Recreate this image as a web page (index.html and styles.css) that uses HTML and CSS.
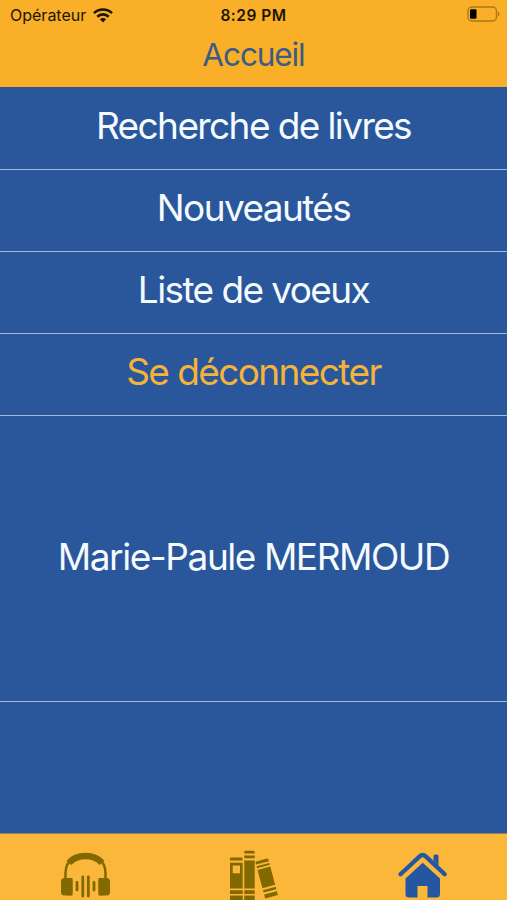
FILE: index.html
```
<!DOCTYPE html>
<html lang="fr">
<head>
    <meta charset="UTF-8">
    <meta name="viewport" content="width=device-width, initial-scale=1.0">
    <title>Accueil</title>
    <link rel="stylesheet" href="styles.css">
</head>
<body>
    <header class="header">
        <div class="status-bar">
            <div class="carrier">
                <span class="carrier-name">Opérateur</span>
                <svg class="wifi" viewBox="0 0 20 15" width="20" height="15">
                    <g fill="none" stroke="#1c1503" stroke-width="2.7">
                        <path d="M1 5.1C6 .3 14 .3 19 5.1"/>
                        <path d="M4.3 8.7C7.5 5.7 12.5 5.7 15.7 8.7"/>
                    </g>
                    <path fill="#1c1503" d="M10 14.4L6.9 11.3C8.6 9.7 11.4 9.7 13.1 11.3Z"/>
                </svg>
            </div>
            <span class="time">8:29 PM</span>
            <div class="battery">
                <svg viewBox="0 0 34 16" width="34" height="16">
                    <rect x="1" y="1" width="28.5" height="14" rx="4" fill="none" stroke="#ad7718" stroke-width="1.4"/>
                    <rect x="3" y="3.2" width="6.5" height="9.6" rx="1.2" fill="#000"/>
                    <path fill="#ad7718" d="M31 5.6C33 6.2 33 9.8 31 10.4Z"/>
                </svg>
            </div>
        </div>
        <h1 class="title">Accueil</h1>
    </header>

    <main class="menu">
        <a class="menu-item first">Recherche de livres</a>
        <a class="menu-item">Nouveautés</a>
        <a class="menu-item">Liste de voeux</a>
        <a class="menu-item logout">Se déconnecter</a>
        <div class="menu-item user">Marie-Paule MERMOUD</div>
    </main>

    <nav class="tab-bar">
        <a class="tab">
            <svg class="tab-icon" viewBox="0 0 70 60" width="70" height="60">
                <g fill="none" stroke="#816900">
                    <path stroke-width="2.5" d="M15.5 39V33C15.5 27 18 22 22 18.5M55.5 39V33C55.5 27 53 22 49 18.5"/>
                    <path stroke-width="6.5" d="M19 22.8C27 13.8 44 13.800 52 22.800"/>
                    <path stroke-width="2.8" stroke-linecap="round" d="M27 42.5V50M32.8 37V56M38.3 37V56M44 42.5V50"/>
                </g>
                <g fill="#816900">
                    <rect x="11" y="38" width="11.5" height="17.5" rx="3.5"/>
                    <path d="M18 38h4.5v17.5h-4.5z"/>
                    <rect x="48.5" y="38" width="11.5" height="17.5" rx="3.5"/>
                    <path d="M48.5 38h4.5v17.5h-4.5z"/>
                </g>
            </svg>
        </a>
        <a class="tab">
            <svg class="tab-icon" viewBox="0 0 70 60" width="70" height="60">
                <g fill="#816900">
                    <path d="M10 20V18.5Q10 17.5 11 17.5H21.5Q22.5 17.5 22.5 18.5V20.5H10Z"/>
                    <path fill-rule="evenodd" d="M10 22.7H22.7V48.5H10ZM12.7 25.5V33.3H20V25.5Z"/>
                    <path d="M10 50.3H22.7V54H10ZM10 55.5H22.7V60H10Z"/>
                    <path d="M24.3 13.5V12Q24.3 10.7 25.6 10.7H33.5Q34.7 10.7 34.7 12V13.5ZM24.3 15.5H34.7V18.3H24.3ZM24.3 20.5H34.7V48.5H24.3ZM24.3 50.3H34.7V54H24.3ZM24.3 55.5H34.7V60H24.3Z"/>
                    <g transform="translate(35.3 21.7) rotate(-15)">
                        <path d="M0 3V1Q0 0 1 0H12.2Q13.2 0 13.2 1V3ZM0 4.8H13.2V6.8H0ZM0 8.6H13.2V27.5H0ZM0 29.5H13.2V32H0ZM0 34H13.2V38H0Z"/>
                    </g>
                </g>
            </svg>
        </a>
        <a class="tab">
            <svg class="tab-icon" viewBox="0 0 70 60" width="70" height="60">
                <path fill="none" stroke="#2456a2" stroke-width="4.3" stroke-linecap="round" stroke-linejoin="round" d="M10.5 34.3L29.7 16.4Q32.7 13.7 35.7 16.4L54.7 34.3"/>
                <path fill="#2456a2" d="M43.5 20.5V16Q43.5 14.5 45 14.5H47Q48.5 14.5 48.5 16V26Z"/>
                <path fill="#2456a2" d="M15.5 38.5L32.7 22.8L50 38.5V54Q50 57.500 46.500 57.500H37.500V46H27.500V57.500H19Q15.500 57.500 15.500 54Z"/>
            </svg>
        </a>
    </nav>
</body>
</html>
```

FILE: styles.css
```
* {
    box-sizing: border-box;
}
body {
    display: flex;
    flex-direction: column;
    height: 900px;
    margin: 0;
    overflow: hidden;
    background-color: #2a579b;
    font-family: Inter, "Liberation Sans", sans-serif;
}
.header {
    height: 87px;
    background-color: #f9af27;
}
.status-bar {
    display: grid;
    grid-template-columns: 1fr auto 1fr;
    align-items: center;
    height: 30px;
    padding: 0 10px;
    color: #1c1503;
}
.carrier {
    display: flex;
    align-items: center;
    gap: 7px;
    font-size: 16px;
}
.time {
    font-size: 15.5px;
    font-weight: 600;
    letter-spacing: 0.5px;
}
.battery {
    display: flex;
    justify-content: flex-end;
    margin: -2px -4px 0 0;
}
.title {
    margin: 5px 0 0;
    color: #3b5c83;
    font-size: 31.5px;
    font-weight: 400;
    line-height: 40px;
    letter-spacing: -1.1px;
    text-align: center;
}
.menu {
    flex: 1;
}
.menu-item {
    display: flex;
    justify-content: center;
    align-items: center;
    height: 82px;
    padding-bottom: 6px;
    border-bottom: 1px solid #a3b7da;
    color: #f5faff;
    font-size: 37px;
    letter-spacing: -1.6px;
    white-space: nowrap;
}
.menu-item.first {
    height: 83px;
}
.menu-item.logout {
    color: #f4b33b;
}
.menu-item.user {
    height: 286px;
    padding-bottom: 4px;
    letter-spacing: -1.45px;
}
.tab-bar {
    display: grid;
    grid-template-columns: repeat(3, 170px);
    height: 66px;
    padding-top: 6px;
    background-color: #fab73a;
    box-shadow: 0 -1px 0 #96815c;
}
.tab {
    display: flex;
    justify-content: center;
}
.tab-icon {
    flex: none;
}
```
